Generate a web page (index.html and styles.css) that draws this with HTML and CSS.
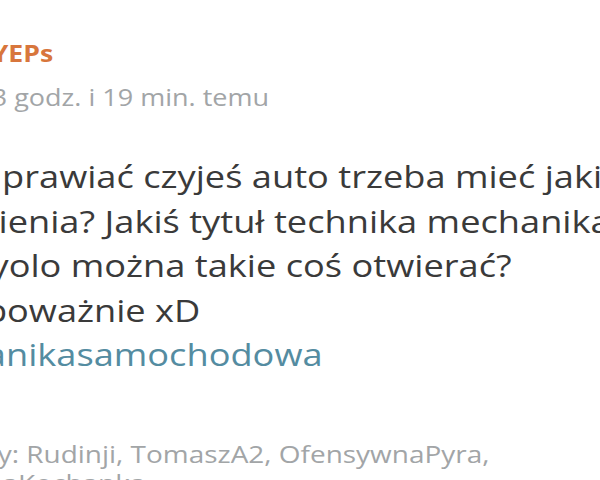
FILE: index.html
```html
<!DOCTYPE html>
<html lang="pl">

<head>
    <meta charset="UTF-8">
    <meta name="viewport" content="width=device-width, initial-scale=1.0">
    <title>Wpis</title>
    <link rel="stylesheet" href="styles.css">
</head>

<body>
    <div class="entry">
        <div class="author">
            <div class="nick">YEPs</div>
            <div class="date">3 godz. i 19 min. temu</div>
        </div>

        <div class="content">
            <div class="line">Żeby naprawiać czyjeś auto trzeba mieć jakieś</div>
            <div class="line">uprawnienia? Jakiś tytuł technika mechanika czy</div>
            <div class="line">czy też yolo można takie coś otwierać?</div>
            <div class="line">Pytam poważnie xD</div>
            <div class="line"><a class="tag" href="#">#mechanikasamochodowa</a></div>
        </div>

        <div class="votes">
            <div class="line">Plusujący: Rudinji, TomaszA2, OfensywnaPyra,</div>
            <div class="line">NamiętnaKochanka</div>
        </div>
    </div>
</body>

</html>
```

FILE: styles.css
```css
* {
    box-sizing: border-box;
    margin: 0;
    padding: 0;
}

html,
body {
    overflow: hidden;
}

body {
    font-family: "Open Sans", "Liberation Sans", sans-serif;
    background-color: #fff;
    width: 600px;
    height: 480px;
}

/* screenshot is stretched sideways, so the whole entry is too */
.entry {
    margin-left: -131px;
    padding-top: 32px;
    transform: scaleX(1.18);
    transform-origin: 0 0;
    white-space: nowrap;
}

.author {
    margin-left: 104px;
}

.nick {
    font-size: 22.6px;
    font-weight: 700;
    line-height: 44px;
    color: #d8763c;
}

.date {
    font-size: 22.9px;
    line-height: 44px;
    color: #a2a5a7;
}

.content {
    margin-top: 34px;
    font-size: 30.7px;
    line-height: 44.5px;
    color: #3a3a3a;
}

.tag {
    color: #548ca1;
    text-decoration: none;
}

.votes {
    margin-top: 63px;
    margin-left: 18px;
    font-size: 23.7px;
    line-height: 29px;
    color: #a2a5a7;
}
```
